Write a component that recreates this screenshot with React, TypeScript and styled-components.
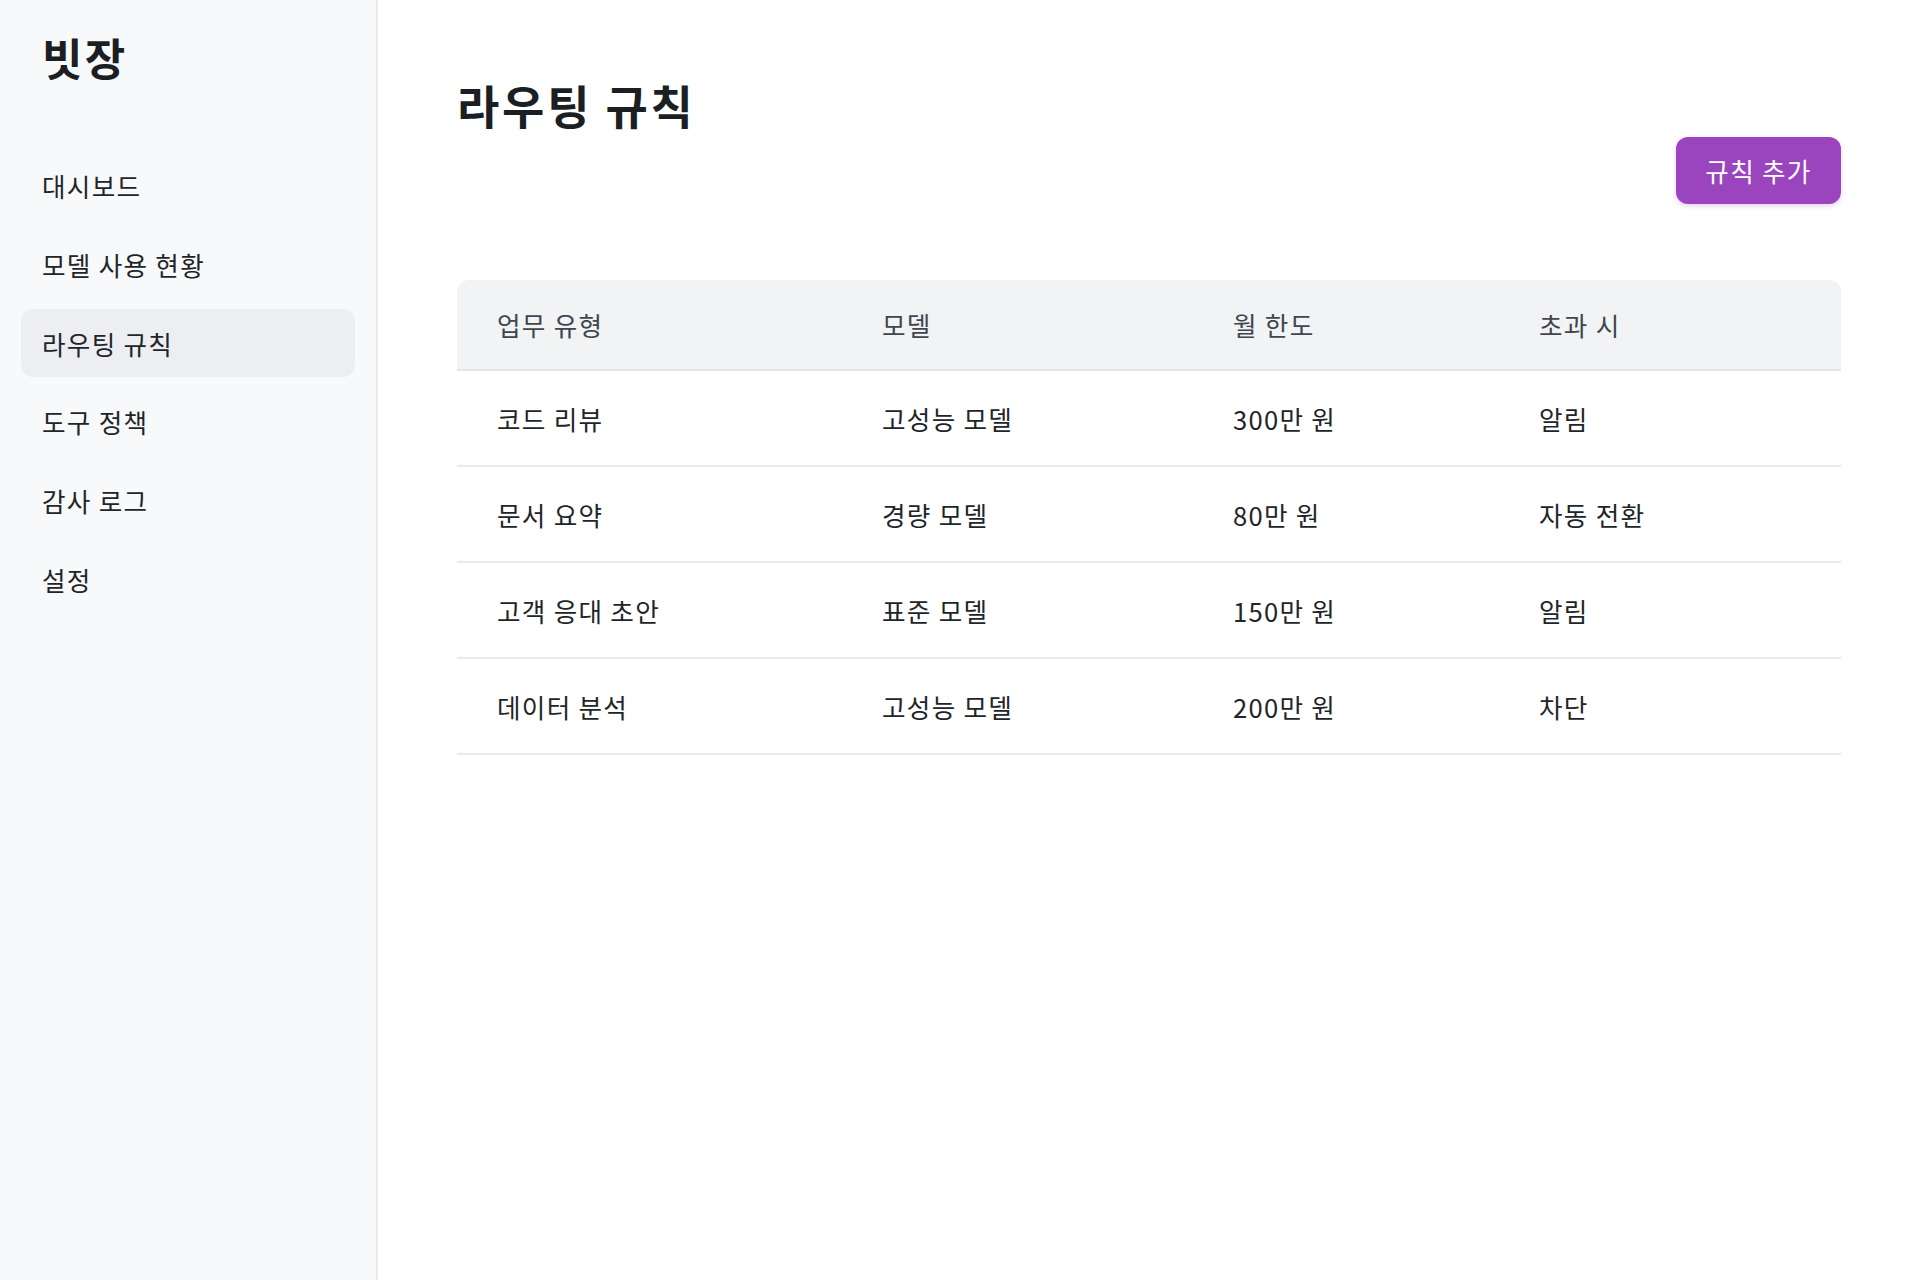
import React from 'react';
import styled, { createGlobalStyle } from 'styled-components';

interface Rule {
    task: string;
    model: string;
    limit: string;
    overflow: string;
}

const navItems = ['대시보드', '모델 사용 현황', '라우팅 규칙', '도구 정책', '감사 로그', '설정'];

const rules: Rule[] = [
    { task: '코드 리뷰', model: '고성능 모델', limit: '300만 원', overflow: '알림' },
    { task: '문서 요약', model: '경량 모델', limit: '80만 원', overflow: '자동 전환' },
    { task: '고객 응대 초안', model: '표준 모델', limit: '150만 원', overflow: '알림' },
    { task: '데이터 분석', model: '고성능 모델', limit: '200만 원', overflow: '차단' },
];

const App: React.FC = () => {
    return (
        <>
            <GlobalStyle />
            <Layout>
                <Sidebar>
                    <Logo>빗장</Logo>
                    <Nav>
                        {navItems.map((item) => (
                            <NavItem key={item} $active={item === '라우팅 규칙'}>
                                {item}
                            </NavItem>
                        ))}
                    </Nav>
                </Sidebar>
                <Main>
                    <Title>라우팅 규칙</Title>
                    <ActionBar>
                        <PrimaryButton type="button">규칙 추가</PrimaryButton>
                    </ActionBar>
                    <RulesTable>
                        <thead>
                            <tr>
                                <HeadCell $width={385}>업무 유형</HeadCell>
                                <HeadCell $width={351}>모델</HeadCell>
                                <HeadCell $width={306}>월 한도</HeadCell>
                                <HeadCell>초과 시</HeadCell>
                            </tr>
                        </thead>
                        <tbody>
                            {rules.map((rule) => (
                                <tr key={rule.task}>
                                    <Cell>{rule.task}</Cell>
                                    <Cell>{rule.model}</Cell>
                                    <Cell>{rule.limit}</Cell>
                                    <Cell>{rule.overflow}</Cell>
                                </tr>
                            ))}
                        </tbody>
                    </RulesTable>
                </Main>
            </Layout>
        </>
    );
};

export default App;

const GlobalStyle = createGlobalStyle`
    * {
        box-sizing: border-box;
    }
    body {
        margin: 0;
        background: #ffffff;
        font-family: "Noto Sans CJK KR", "Noto Sans", sans-serif;
        color: #212529;
    }
`;

const Layout = styled.div`
    display: flex;
    min-height: 100vh;
`;

const Sidebar = styled.aside`
    width: 378px;
    flex-shrink: 0;
    background: #f8f9fa;
    border-right: 2px solid #e7e9ec;
    padding: 31px 21px;
`;

const Logo = styled.div`
    padding-left: 21px;
    font-size: 44px;
    font-weight: 700;
    line-height: 1.2;
    letter-spacing: 0.05em;
    color: #1b1f24;
`;

const Nav = styled.nav`
    display: flex;
    flex-direction: column;
    gap: 10.7px;
    margin-top: 68px;
`;

const NavItem = styled.div<{ $active?: boolean }>`
    height: 68px;
    display: flex;
    align-items: center;
    padding: 0 21px;
    border-radius: 12px;
    font-size: 25.6px;
    letter-spacing: 0.05em;
    color: #212529;
    background: ${({ $active }) => ($active ? '#eceef1' : 'transparent')};
`;

const Main = styled.main`
    flex: 1;
    padding: 77px 79px 0 79px;
`;

const Title = styled.h1`
    margin: 0;
    font-size: 46px;
    font-weight: 700;
    line-height: 1.2;
    letter-spacing: 0.06em;
    color: #1b1f24;
`;

const ActionBar = styled.div`
    display: flex;
    justify-content: flex-end;
    margin-top: 5px;
    margin-bottom: 76px;
`;

const PrimaryButton = styled.button`
    width: 165px;
    height: 67px;
    border: none;
    border-radius: 12px;
    background: #9a45bd;
    color: #ffffff;
    font-family: inherit;
    font-size: 25.6px;
    letter-spacing: 0.05em;
    box-shadow: 0 2px 5px rgba(154, 69, 189, 0.25);
    cursor: pointer;
`;

const RulesTable = styled.table`
    width: 100%;
    border-collapse: separate;
    border-spacing: 0;
`;

const HeadCell = styled.th<{ $width?: number }>`
    width: ${({ $width }) => ($width ? `${$width}px` : 'auto')};
    height: 91px;
    padding: 0 40px;
    text-align: left;
    font-size: 25.6px;
    font-weight: 400;
    letter-spacing: 0.05em;
    color: #40464d;
    background: #f1f3f5;
    border-bottom: 2px solid #e3e5e8;

    &:first-child {
        border-top-left-radius: 12px;
    }
    &:last-child {
        border-top-right-radius: 12px;
    }
`;

const Cell = styled.td`
    height: 96px;
    padding: 0 40px;
    font-size: 25.6px;
    letter-spacing: 0.05em;
    color: #222528;
    border-bottom: 2px solid #e8eaed;
`;
